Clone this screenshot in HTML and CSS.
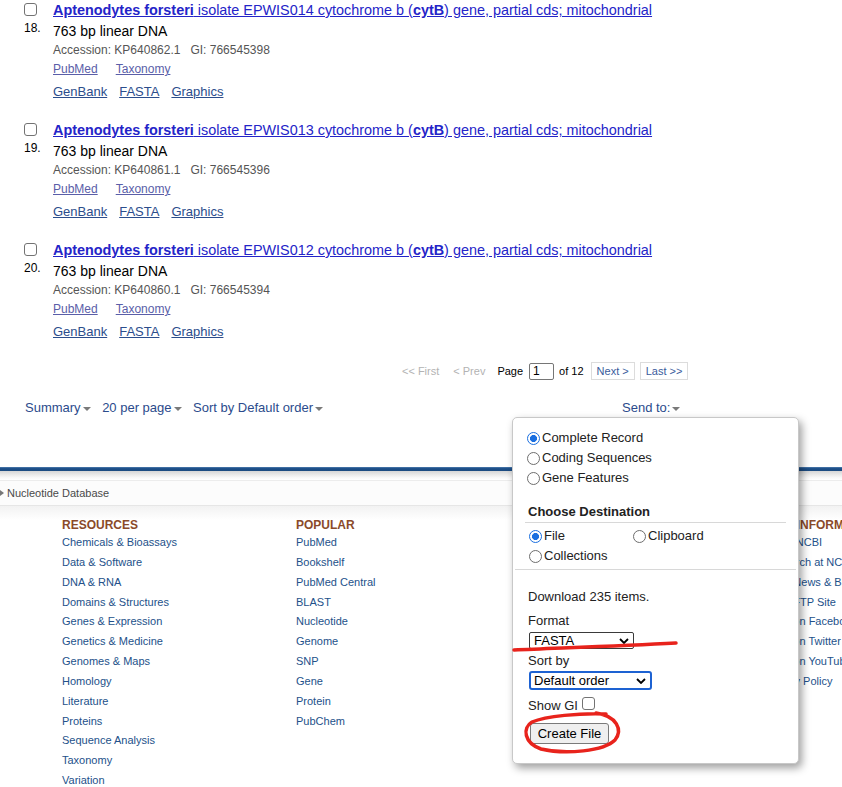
FILE: index.html
```html
<!DOCTYPE html>
<html lang="en">
<head>
<meta charset="utf-8">
<title>Nucleotide - NCBI</title>
<link rel="stylesheet" href="styles.css">
</head>
<body>
<main class="content">
  <div class="results">
    <div class="rslt">
      <div class="rnum"><span class="cb"></span><span class="num">18.</span></div>
      <div class="rbody">
        <p class="title"><a href="#"><b>Aptenodytes forsteri</b> isolate EPWIS014 cytochrome b (<b>cytB</b>) gene, partial cds; mitochondrial</a></p>
        <p class="desc">763 bp linear DNA</p>
        <p class="acc">Accession: KP640862.1<span class="gi">GI: 766545398</span></p>
        <p class="rel"><a href="#">PubMed</a><a href="#">Taxonomy</a></p>
        <p class="fmt"><a href="#">GenBank</a><a href="#">FASTA</a><a href="#">Graphics</a></p>
      </div>
    </div>
    <div class="rslt">
      <div class="rnum"><span class="cb"></span><span class="num">19.</span></div>
      <div class="rbody">
        <p class="title"><a href="#"><b>Aptenodytes forsteri</b> isolate EPWIS013 cytochrome b (<b>cytB</b>) gene, partial cds; mitochondrial</a></p>
        <p class="desc">763 bp linear DNA</p>
        <p class="acc">Accession: KP640861.1<span class="gi">GI: 766545396</span></p>
        <p class="rel"><a href="#">PubMed</a><a href="#">Taxonomy</a></p>
        <p class="fmt"><a href="#">GenBank</a><a href="#">FASTA</a><a href="#">Graphics</a></p>
      </div>
    </div>
    <div class="rslt">
      <div class="rnum"><span class="cb"></span><span class="num">20.</span></div>
      <div class="rbody">
        <p class="title"><a href="#"><b>Aptenodytes forsteri</b> isolate EPWIS012 cytochrome b (<b>cytB</b>) gene, partial cds; mitochondrial</a></p>
        <p class="desc">763 bp linear DNA</p>
        <p class="acc">Accession: KP640860.1<span class="gi">GI: 766545394</span></p>
        <p class="rel"><a href="#">PubMed</a><a href="#">Taxonomy</a></p>
        <p class="fmt"><a href="#">GenBank</a><a href="#">FASTA</a><a href="#">Graphics</a></p>
      </div>
    </div>
  </div>

  <div class="pager">
    <span class="pg-dis pg-first">&lt;&lt; First</span>
    <span class="pg-dis pg-prev">&lt; Prev</span>
    <span class="pg-lbl">Page</span>
    <span class="pg-input">1</span>
    <span class="pg-lbl pg-of">of 12</span>
    <span class="pg-btn">Next &gt;</span>
    <span class="pg-btn">Last &gt;&gt;</span>
  </div>

  <div class="display-bar">
    <div class="dsettings">
      <span class="dsel">Summary<i class="tri"></i></span>
      <span class="dsel">20 per page<i class="tri"></i></span>
      <span class="dsel">Sort by Default order<i class="tri"></i></span>
    </div>
    <span class="dsel sendto">Send to:<i class="tri"></i></span>
  </div>
</main>

<footer class="footer">
  <div class="fbar"></div>
  <div class="fshade"></div>
  <div class="crumb"><i class="crumb-arrow"></i>Nucleotide Database</div>
  <div class="fcols">
    <div class="fcol">
      <h3>RESOURCES</h3>
      <a href="#">Chemicals &amp; Bioassays</a>
      <a href="#">Data &amp; Software</a>
      <a href="#">DNA &amp; RNA</a>
      <a href="#">Domains &amp; Structures</a>
      <a href="#">Genes &amp; Expression</a>
      <a href="#">Genetics &amp; Medicine</a>
      <a href="#">Genomes &amp; Maps</a>
      <a href="#">Homology</a>
      <a href="#">Literature</a>
      <a href="#">Proteins</a>
      <a href="#">Sequence Analysis</a>
      <a href="#">Taxonomy</a>
      <a href="#">Variation</a>
    </div>
    <div class="fcol">
      <h3>POPULAR</h3>
      <a href="#">PubMed</a>
      <a href="#">Bookshelf</a>
      <a href="#">PubMed Central</a>
      <a href="#">BLAST</a>
      <a href="#">Nucleotide</a>
      <a href="#">Genome</a>
      <a href="#">SNP</a>
      <a href="#">Gene</a>
      <a href="#">Protein</a>
      <a href="#">PubChem</a>
    </div>
    <div class="fcol"></div>
    <div class="fcol">
      <h3>NCBI INFORMATION</h3>
      <a href="#">About NCBI</a>
      <a href="#">Research at NCBI</a>
      <a href="#">NCBI News &amp; Blog</a>
      <a href="#">NCBI FTP Site</a>
      <a href="#">NCBI on Facebook</a>
      <a href="#">NCBI on Twitter</a>
      <a href="#">NCBI on YouTube</a>
      <a href="#">Privacy Policy</a>
    </div>
  </div>
</footer>

<div class="popup">
  <div class="opts">
    <div class="opt"><span class="radio on"></span>Complete Record</div>
    <div class="opt"><span class="radio"></span>Coding Sequences</div>
    <div class="opt"><span class="radio"></span>Gene Features</div>
  </div>
  <h4 class="dest-h">Choose Destination</h4>
  <div class="dests">
    <div class="opt"><span class="radio on"></span>File</div>
    <div class="opt"><span class="radio"></span>Clipboard</div>
    <div class="opt"><span class="radio"></span>Collections</div>
  </div>
  <div class="filebox">
    <div class="line">Download 235 items.</div>
    <div class="line lbl">Format</div>
    <div class="sel sel-fmt"><span>FASTA</span><svg class="chev" viewBox="0 0 10 6" width="10" height="6"><path d="M1 1 L5 5 L9 1" fill="none" stroke="#000" stroke-width="1.8"/></svg></div>
    <div class="line lbl lbl-sort">Sort by</div>
    <div class="sel sel-sort"><span>Default order</span><svg class="chev" viewBox="0 0 10 6" width="10" height="6"><path d="M1 1 L5 5 L9 1" fill="none" stroke="#000" stroke-width="1.8"/></svg></div>
    <div class="line showgi">Show GI<span class="cb cb-gi"></span></div>
    <span class="btn">Create File</span>
  </div>
</div>

<svg class="marks" width="842" height="787" viewBox="0 0 842 787">
  <path d="M514 650 C 560 648, 620 646, 676 643" fill="none" stroke="#e8231c" stroke-width="3.5" stroke-linecap="round"/>
  <path d="M606 714 C 580 713, 546 716, 532 722 C 522 728, 524 743, 541 749 C 566 755, 604 751, 615 740 C 623 730, 617 716, 596 713" fill="none" stroke="#e8231c" stroke-width="3.5" stroke-linecap="round"/>
</svg>
</body>
</html>
```

FILE: styles.css
```css
* { box-sizing: border-box; }

html, body {
  margin: 0;
  padding: 0;
}

body {
  font-family: "Liberation Sans", Arial, sans-serif;
  background: #fff;
  color: #000;
  width: 842px;
  height: 787px;
  overflow: hidden;
  position: relative;
}

a { text-decoration: none; }

/* ---------- results ---------- */
.results { padding-left: 24px; }

.rslt {
  display: flex;
  height: 120px;
}

.rnum {
  width: 29px;
  flex: none;
  font-size: 12px;
}

.cb {
  display: block;
  width: 13px;
  height: 13px;
  border: 1px solid #737373;
  border-radius: 3px;
  background: #fff;
}

.rnum .cb { margin-top: 3px; }

.num {
  display: block;
  margin-top: 5px;
  line-height: 14px;
}

.rbody p { margin: 0; }

.title {
  font-size: 14.4px;
  line-height: 20px;
  white-space: nowrap;
}

.title a {
  color: #2424c8;
  text-decoration: underline;
}

.desc {
  font-size: 14px;
  line-height: 22px;
}

.acc {
  font-size: 12px;
  line-height: 16px;
  color: #555;
}

.gi { margin-left: 10px; }

.rbody .rel {
  font-size: 12px;
  line-height: 18px;
  margin-top: 2px;
  display: flex;
  gap: 18px;
}

.rel a {
  color: #5a5ea8;
  text-decoration: underline;
}

.rbody .fmt {
  font-size: 13px;
  line-height: 18px;
  margin-top: 5px;
  display: flex;
  gap: 12px;
}

.fmt a {
  color: #2b4d8c;
  text-decoration: underline;
}

/* ---------- pager ---------- */
.pager {
  display: flex;
  align-items: center;
  padding-left: 402px;
  margin-top: 2px;
  height: 18px;
  font-size: 11px;
}

.pg-dis { color: #b3b3b3; }
.pg-prev { margin-left: 14px; }
.pg-lbl { color: #000; }
.pg-prev + .pg-lbl { margin-left: 12px; }

.pg-input {
  width: 25px;
  height: 17px;
  margin-left: 6px;
  margin-right: 5px;
  border: 1px solid #767676;
  border-radius: 2px;
  padding-left: 3px;
  line-height: 15px;
  font-size: 12px;
}

.pg-btn {
  margin-left: 5px;
  height: 18px;
  line-height: 16px;
  border: 1px solid #dcdcdc;
  color: #3a5b9c;
  padding: 0 5px;
}

.pg-of + .pg-btn { margin-left: 7px; }

/* ---------- display bar ---------- */
.display-bar {
  display: flex;
  align-items: center;
  margin-top: 20px;
  padding-left: 25px;
  height: 16px;
  font-size: 13px;
  line-height: 16px;
  color: #2b4b8c;
}

.dsettings {
  display: flex;
  gap: 11.5px;
  width: 597px;
}

.dsel {
  display: inline-flex;
  align-items: center;
}

.tri {
  display: inline-block;
  margin-left: 2px;
  margin-top: 2px;
  width: 0;
  height: 0;
  border-left: 4px solid transparent;
  border-right: 4px solid transparent;
  border-top: 4px solid #7a7a7a;
}

/* ---------- footer ---------- */
.footer { margin-top: 51px; }

.fbar {
  height: 4px;
  background: linear-gradient(#4f7cae, #1c4f88 40%, #1b4a80);
}

.fshade {
  height: 9px;
  background: linear-gradient(#d6d6d6, #f7f7f7 70%, #fff);
}

.crumb {
  height: 26px;
  border-top: 1px solid #ececec;
  border-bottom: 1px solid #e6e6e6;
  background: #fcfcfc;
  font-size: 11px;
  line-height: 24px;
  color: #4a4a4a;
  display: flex;
  align-items: center;
}

.crumb-arrow {
  display: inline-block;
  width: 0;
  height: 0;
  border-top: 3px solid transparent;
  border-bottom: 3px solid transparent;
  border-left: 4px solid #777;
  margin-right: 3px;
}

.fcols {
  display: grid;
  grid-template-columns: repeat(4, 234px);
  padding: 10px 0 0 62px;
  background: linear-gradient(#f2f2f2, #fff 14px);
  overflow: hidden;
  width: 842px;
}

.fcol {
  display: flex;
  flex-direction: column;
  min-width: 0;
}

.fcol h3 {
  margin: 0 0 -2px 0;
  font-size: 12px;
  line-height: 18px;
  color: #8a4a2a;
  font-weight: bold;
  white-space: nowrap;
}

.fcol a {
  font-size: 11px;
  line-height: 20px;
  height: 19.85px;
  color: #23518a;
  white-space: nowrap;
}

/* ---------- send to popup ---------- */
.popup {
  position: absolute;
  left: 512px;
  top: 417px;
  width: 287px;
  height: 347px;
  background: #fff;
  border: 1px solid #c8c8c8;
  border-radius: 5px;
  box-shadow: 3px 4px 9px rgba(0, 0, 0, 0.38);
  font-size: 13px;
  color: #222;
  padding: 10px 0 0 0;
}

.opts, .dests { padding-left: 14px; }

.opt {
  display: flex;
  align-items: center;
  height: 20px;
  line-height: 20px;
  white-space: nowrap;
}

.radio {
  width: 13px;
  height: 13px;
  border-radius: 50%;
  border: 1px solid #6e6e6e;
  background: #fff;
  margin-right: 2px;
  flex: none;
}

.radio.on {
  border: 1.5px solid #1a6fe0;
  background: radial-gradient(circle, #1a6fe0 0 3.2px, #fff 3.8px);
}

.dest-h {
  margin: 14px 12px 0 12px;
  padding-left: 3px;
  font-size: 13px;
  line-height: 20px;
  height: 21px;
  border-bottom: 1px solid #d8d8d8;
  color: #222;
}

.dests {
  display: grid;
  grid-template-columns: 104px auto;
  padding-top: 3px;
  padding-bottom: 3px;
  margin: 0 2px;
  border-bottom: 1px solid #d8d8d8;
}

.filebox {
  padding: 17px 0 0 15px;
}

.line {
  height: 20px;
  line-height: 20px;
}

.lbl { margin-top: 4px; }
.lbl-sort { margin-top: 2px; }

.sel {
  display: flex;
  align-items: center;
  justify-content: space-between;
  border: 1px solid #3a3a3a;
  border-radius: 2px;
  color: #000;
  font-size: 13px;
  padding: 0 4px 0 4px;
  margin-left: 1px;
}

.sel-fmt {
  width: 105px;
  height: 17px;
  margin-top: 1px;
}

.sel-sort {
  width: 123px;
  height: 19px;
  border: 2px solid #1d62d2;
  border-radius: 3px;
  padding-left: 3px;
}

.chev { flex: none; }

.showgi {
  display: flex;
  align-items: center;
  margin-top: 6px;
}

.cb-gi { margin-left: 4px; margin-top: -6px; }

.btn {
  display: inline-block;
  margin-top: 7px;
  margin-left: 2px;
  width: 79px;
  height: 21px;
  line-height: 19px;
  text-align: center;
  background: #efefef;
  border: 1px solid #7a7a7a;
  border-radius: 3px;
  color: #000;
  font-size: 13px;
}

/* ---------- annotations ---------- */
.marks {
  position: absolute;
  left: 0;
  top: 0;
  pointer-events: none;
}
```
